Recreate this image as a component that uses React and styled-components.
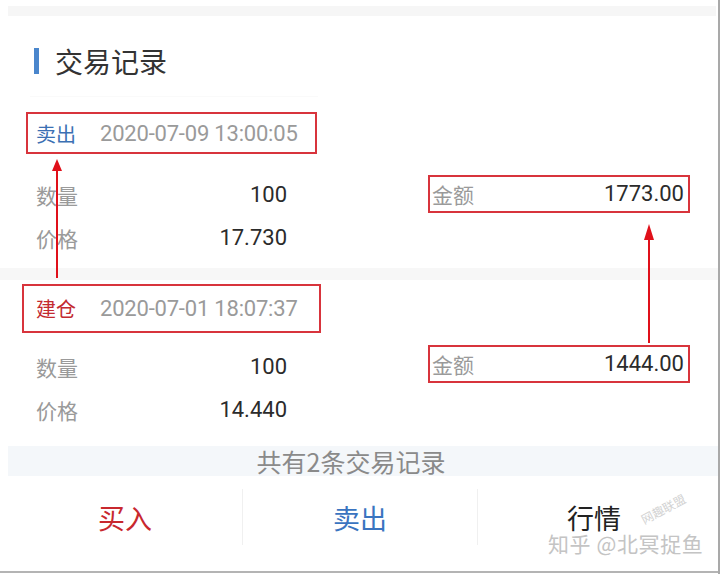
import React from "react";
import styled, { createGlobalStyle } from "styled-components";

const Global = createGlobalStyle`
  html, body { margin: 0; padding: 0; background: #fff; }
  body { font-family: Roboto, "Noto Sans CJK SC", sans-serif; }
  * { box-sizing: border-box; }
`;

const Page = styled.div`
  position: relative;
  width: 720px;
  height: 574px;
  overflow: hidden;
  background: #fff;
  border-right: 2px solid #a9a9a9;
  display: flex;
  flex-direction: column;
  &::after {
    content: "";
    position: absolute;
    left: 0;
    right: 0;
    top: 571px;
    height: 2px;
    background: #b4b4b4;
  }
`;

const TopBand = styled.div`
  margin: 6px 2px 0 8px;
  height: 10px;
  background: #f6f6f6;
`;

const TitleRow = styled.div`
  margin-top: 32px;
  padding-left: 34px;
  height: 26px;
  display: flex;
  align-items: center;
  gap: 16px;
`;

const TitleBar = styled.div`
  width: 5px;
  height: 26px;
  background: #4a86cc;
`;

const TitleText = styled.div`
  font-family: "Noto Sans CJK SC", sans-serif;
  font-size: 28px;
  line-height: 26px;
  color: #333;
`;

const Hairline = styled.div`
  margin: 22px 400px 0 30px;
  height: 1px;
  background: #fafafa;
`;

const Record = styled.section`
  display: flex;
  flex-direction: column;
  margin-top: ${(p) => p.$top}px;
`;

const Header = styled.div`
  margin-left: ${(p) => p.$left}px;
  width: ${(p) => p.$width}px;
  height: ${(p) => p.$height}px;
  border: 2px solid #d8343c;
  display: flex;
  align-items: center;
  padding-left: ${(p) => 36 - p.$left - 2}px;
  gap: 24px;
`;

const Kind = styled.span`
  font-family: "Noto Sans CJK SC", sans-serif;
  font-size: 20px;
  color: ${(p) => p.$color};
`;

const Stamp = styled.span`
  font-family: Roboto, sans-serif;
  font-size: 22px;
  letter-spacing: -0.2px;
  color: #9a9a9a;
`;

const Grid = styled.div`
  margin-top: ${(p) => p.$top}px;
  padding-left: 36px;
  display: grid;
  grid-template-columns: 251px 262px;
  column-gap: 141px;
  grid-auto-rows: 43px;
  align-items: center;
`;

const Pair = styled.div`
  display: flex;
  justify-content: space-between;
  align-items: center;
  height: 43px;
`;

const Label = styled.span`
  font-family: "Noto Sans CJK SC", sans-serif;
  font-size: 21px;
  color: #9a9a9a;
`;

const Value = styled.span`
  font-family: Roboto, sans-serif;
  font-size: 22px;
  color: #2b2b2b;
`;

const AmountBox = styled.div`
  height: 38px;
  border: 2px solid #d8343c;
  display: flex;
  justify-content: space-between;
  align-items: center;
  padding: 0 4px 0 2px;
  transform: translateY(${(p) => p.$shift}px);
`;

const Gap = styled.div`
  margin-top: 9px;
  height: 12px;
  background: #f7f7f7;
`;

const Summary = styled.div`
  margin: 15px 0 0 8px;
  height: 30px;
  background: #f4f7fa;
  display: flex;
  align-items: center;
  justify-content: center;
  font-family: "Noto Sans CJK SC", sans-serif;
  font-size: 25px;
  color: #8a8a8a;
  padding-right: 24px;
`;

const Actions = styled.div`
  margin-top: 13px;
  height: 56px;
  display: grid;
  grid-template-columns: 242px 235px 1fr;
`;

const Action = styled.div`
  display: flex;
  align-items: center;
  justify-content: center;
  font-family: "Noto Sans CJK SC", sans-serif;
  font-size: 27px;
  line-height: 27px;
  color: ${(p) => p.$color};
  border-left: ${(p) => (p.$divider ? "1px solid #f0f0f0" : "none")};
  padding-left: ${(p) => p.$pad || 0}px;
  padding-right: ${(p) => p.$padR || 0}px;
`;

const Arrow = styled.svg`
  position: absolute;
  left: 0;
  top: 0;
  pointer-events: none;
`;

const Watermark = styled.div`
  position: absolute;
  left: 548px;
  top: 532px;
  font-family: "Noto Sans CJK SC", sans-serif;
  font-size: 21px;
  line-height: 23px;
  color: #c4c4c4;
  letter-spacing: 0.6px;
  text-shadow: 0 0 1px #fff;
`;

const Stamp2 = styled.div`
  position: absolute;
  left: 642px;
  top: 514px;
  font-family: "Noto Sans CJK SC", sans-serif;
  font-size: 12px;
  line-height: 12px;
  color: #d2d2d2;
  transform: rotate(-28deg);
  transform-origin: left center;
`;

function RecordBlock({ top, hdr, kind, kindColor, time, qty, price, amount, gridTop, boxShift }) {
  return (
    <Record $top={top}>
      <Header $left={hdr.left} $width={hdr.width} $height={hdr.height}>
        <Kind $color={kindColor}>{kind}</Kind>
        <Stamp>{time}</Stamp>
      </Header>
      <Grid $top={gridTop}>
        <Pair>
          <Label>数量</Label>
          <Value>{qty}</Value>
        </Pair>
        <AmountBox $shift={boxShift}>
          <Label>金额</Label>
          <Value>{amount}</Value>
        </AmountBox>
        <Pair>
          <Label>价格</Label>
          <Value>{price}</Value>
        </Pair>
        <div />
      </Grid>
    </Record>
  );
}

export default function App() {
  return (
    <>
      <Global />
      <Page>
        <TopBand />
        <TitleRow>
          <TitleBar />
          <TitleText>交易记录</TitleText>
        </TitleRow>
        <Hairline />
        <RecordBlock
          top={15}
          hdr={{ left: 26, width: 291, height: 42 }}
          kind="卖出"
          kindColor="#3b70b3"
          time="2020-07-09 13:00:05"
          qty="100"
          price="17.730"
          amount="1773.00"
          gridTop={19}
          boxShift={-1}
        />
        <Gap />
        <RecordBlock
          top={4}
          hdr={{ left: 22, width: 299, height: 49 }}
          kind="建仓"
          kindColor="#c32a30"
          time="2020-07-01 18:07:37"
          qty="100"
          price="14.440"
          amount="1444.00"
          gridTop={12}
          boxShift={-3}
        />
        <Summary>共有2条交易记录</Summary>
        <Actions>
          <Action $color="#c8282e" $pad={8}>买入</Action>
          <Action $color="#3a74c0" $divider>卖出</Action>
          <Action $color="#222" $divider $padR={8}>行情</Action>
        </Actions>
        <Arrow width="720" height="574" viewBox="0 0 720 574">
          <line x1="57" y1="278" x2="57" y2="168" stroke="#e0101a" strokeWidth="2" />
          <polygon points="57,159 52,171 62,171" fill="#e0101a" />
          <line x1="649" y1="343" x2="649" y2="236" stroke="#e0101a" strokeWidth="2" />
          <polygon points="649,224 644,240 654,240" fill="#e0101a" />
        </Arrow>
        <Stamp2>网趣联盟</Stamp2>
        <Watermark>知乎 @北冥捉鱼</Watermark>
      </Page>
    </>
  );
}
